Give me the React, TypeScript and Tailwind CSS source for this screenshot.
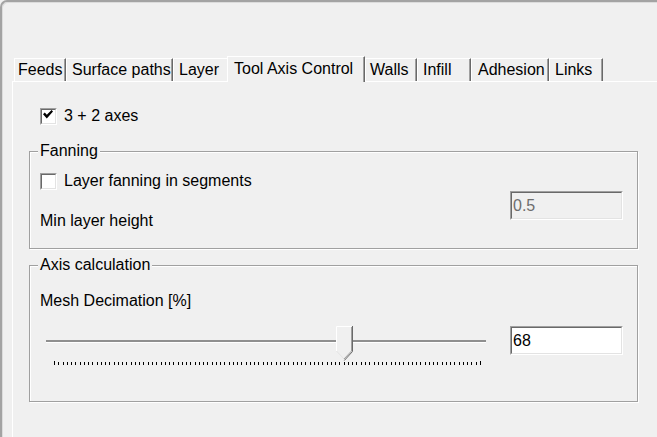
import React from 'react';

const tabs = [
    { label: 'Feeds', w: 'w-[52px]', pl: 'pl-[3px]' },
    { label: 'Surface paths', w: 'w-[107px]', pl: 'pl-[5px]' },
    { label: 'Layer', w: 'w-[54px]', pl: 'pl-[5px]' },
    { label: 'Tool Axis Control', w: 'w-[138px]', pl: 'pl-[6px]' },
    { label: 'Walls', w: 'w-[52px]', pl: 'pl-[4px]' },
    { label: 'Infill', w: 'w-[54px]', pl: 'pl-[5px]' },
    { label: 'Adhesion', w: 'w-[78px]', pl: 'pl-[6px]' },
    { label: 'Links', w: 'w-[54px]', pl: 'pl-[5px]' },
];
const active = 3;

function CheckBox({ checked }: { checked?: boolean }) {
    return (
        <span className="flex w-[17px] h-[17px] shrink-0 border border-t-[#a0a0a0] border-l-[#a0a0a0] border-r-white border-b-white">
            <span className="flex flex-1 items-start pl-[1px] border border-t-[#696969] border-l-[#696969] border-r-[#e3e3e3] border-b-[#e3e3e3] bg-white">
                {checked && (
                    <svg width="10" height="10" viewBox="0 0 10 10">
                        <polygon points="0,4.2 1.8,2.6 3.8,4.8 8.6,0 10,1.6 3.8,8.6" fill="#000" />
                    </svg>
                )}
            </span>
        </span>
    );
}

function TextBox({ value, disabled }: { value: string; disabled?: boolean }) {
    return (
        <div className="w-[113px] h-[29px] shrink-0 border border-t-[#a0a0a0] border-l-[#a0a0a0] border-r-white border-b-white">
            <div
                className={`h-full flex items-center pl-[1px] border border-t-[#696969] border-l-[#696969] border-r-[#e3e3e3] border-b-[#e3e3e3] ${disabled ? 'bg-[#f0f0f0] text-[#6d6d6d]' : 'bg-white text-black'}`}
            >
                {value}
            </div>
        </div>
    );
}

function Slider({ value }: { value: number }) {
    const ticks = Array.from({ length: 101 }, (_, i) => Math.round(8 + i * 4.26));
    const thumbLeft = Math.round(8 + value * 4.26) - 8;
    return (
        <div className="relative w-[440px] h-[40px] ml-[6px]">
            <div className="mt-[14px] h-[2px] bg-[#8f8f8f] shadow-[0_1px_0_#ffffff]" />
            <svg width="440" height="5" className="mt-[18px] block" shapeRendering="crispEdges">
                {ticks.map((x, i) => (
                    <rect key={i} x={x} y={i === 0 || i === 100 ? 1 : 2} width="1" height={i === 0 || i === 100 ? 4 : 3} fill="#000" />
                ))}
            </svg>
            {/* thumb */}
            <svg width="17" height="36" viewBox="0 0 17 36" className="absolute top-0" style={{ left: thumbLeft }}>
                <polygon points="0,0 16,0 16,25 8,34 0,25" fill="#f0f0f0" />
                <polyline points="0.5,25 0.5,0.5 15.5,0.5" fill="none" stroke="#ffffff" strokeWidth="1" />
                <polyline points="0.5,25 8,33" fill="none" stroke="#e3e3e3" strokeWidth="1" />
                <polyline points="15.5,1 15.5,25 8,33" fill="none" stroke="#a0a0a0" strokeWidth="1" />
                <polyline points="16.5,0 16.5,25.5 8.3,34.5" fill="none" stroke="#696969" strokeWidth="1" />
            </svg>
        </div>
    );
}

export default function App() {
    return (
        <div className="w-[657px] h-[437px] overflow-hidden bg-[#f0f0f0] text-black text-[16px] leading-[20px] font-['Liberation_Sans',Arial,sans-serif]">
            <div className="h-[437px] border-t-2 border-l-2 border-[#a3a3a3] rounded-tl-[7px] shadow-[inset_1px_1px_0_#dcdcdc] flex flex-col">
                {/* Tabs */}
                <div className="flex items-end h-[25px] mt-[54px] ml-[12px]">
                    {tabs.map((t, i) =>
                        i === active ? (
                            <div
                                key={t.label}
                                className={`relative z-10 -mb-px h-[26px] ${t.w} ${t.pl} pt-[2px] bg-[#f0f0f0] whitespace-nowrap border-t border-l border-r border-white border-r-[#696969] shadow-[inset_-1px_0_0_#a0a0a0]`}
                            >
                                {t.label}
                            </div>
                        ) : (
                            <div
                                key={t.label}
                                className={`h-[23px] ${t.w} ${t.pl} flex items-center whitespace-nowrap border-t border-l border-white ${i === active - 1 ? '' : 'border-r border-r-[#696969] shadow-[inset_-1px_0_0_#a0a0a0]'}`}
                            >
                                {t.label}
                            </div>
                        )
                    )}
                </div>

                {/* Tab page */}
                <div className="flex-1 ml-[10px] border-t border-l border-white pl-[16px] pt-[24px]">
                    <label className="flex items-center gap-[7px] ml-[11px] h-[20px]">
                        <CheckBox checked />
                        <span>3 + 2 axes</span>
                    </label>

                    <fieldset className="mt-[15px] w-[609px] border border-[#a0a0a0] shadow-[inset_1px_1px_0_#ffffff,1px_1px_0_#ffffff] pl-[10px] pr-[14px] pt-[10px] pb-[17px]">
                        <legend className="-ml-[2px] px-[2px] bg-[#f0f0f0]">Fanning</legend>
                        <label className="flex items-center gap-[7px] h-[20px]">
                            <CheckBox />
                            <span>Layer fanning in segments</span>
                        </label>
                        <div className="flex items-start justify-between">
                            <span className="mt-[20px]">Min layer height</span>
                            <TextBox value="0.5" disabled />
                        </div>
                    </fieldset>

                    <fieldset className="mt-[6px] w-[609px] border border-[#a0a0a0] shadow-[inset_1px_1px_0_#ffffff,1px_1px_0_#ffffff] pl-[10px] pr-[14px] pt-[16px] pb-[35px]">
                        <legend className="-ml-[2px] px-[2px] bg-[#f0f0f0]">Axis calculation</legend>
                        <div>Mesh Decimation [%]</div>
                        <div className="flex items-start mt-[15px]">
                            <Slider value={68} />
                            <div className="ml-[24px]">
                                <TextBox value="68" />
                            </div>
                        </div>
                    </fieldset>
                </div>
            </div>
        </div>
    );
}
